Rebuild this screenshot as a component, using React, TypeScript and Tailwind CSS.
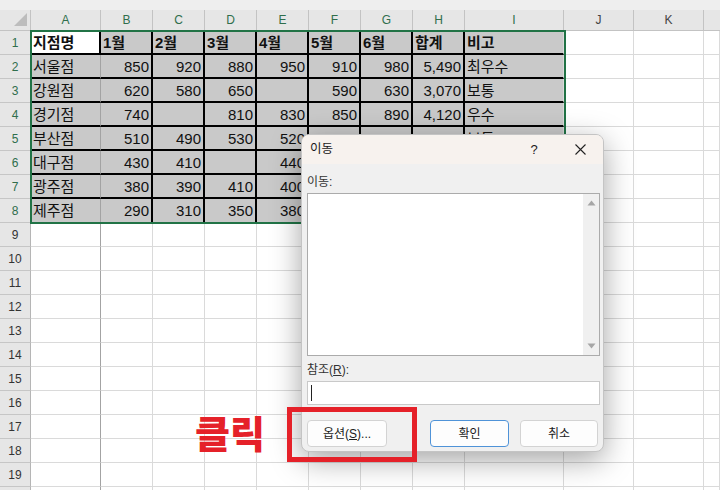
import React from 'react';

const COLS = ['A', 'B', 'C', 'D', 'E', 'F', 'G', 'H', 'I', 'J', 'K'];

const data: string[][] = [
  ['지점명', '1월', '2월', '3월', '4월', '5월', '6월', '합계', '비고'],
  ['서울점', '850', '920', '880', '950', '910', '980', '5,490', '최우수'],
  ['강원점', '620', '580', '650', '', '590', '630', '3,070', '보통'],
  ['경기점', '740', '', '810', '830', '850', '890', '4,120', '우수'],
  ['부산점', '510', '490', '530', '520', '530', '540', '3,120', '보통'],
  ['대구점', '430', '410', '', '440', '450', '460', '2,190', '보통'],
  ['광주점', '380', '390', '410', '400', '420', '430', '2,430', '보통'],
  ['제주점', '290', '310', '350', '380', '360', '370', '2,060', '보통'],
];

const isNumber = (v: string) => /^[\d,]+$/.test(v);

const DataCell: React.FC<{ row: number; col: number }> = ({ row, col }) => {
  // row 1..20, col 0..11 (A..K + filler)
  const inTable = row <= 8 && col <= 8;
  const value = inTable ? data[row - 1][col] : '';

  let bg = 'bg-white';
  let bottom = 'border-b border-b-[#dadada]';
  let right = 'border-r border-r-[#dadada]';

  if (inTable) {
    bg = row === 1 && col === 0 ? 'bg-white' : 'bg-[#c9c9c9]';
    if (row <= 7) bottom = 'border-b-2 border-b-black';
    if ((col >= 1 && col <= 7) || (row === 1 && col === 0)) right = 'border-r-2 border-r-black';
    else if (col === 0) right = 'border-r border-r-[#a3a3a3]';
  } else if (col === 0) {
    right = 'border-r border-r-[#a3a3a3]';
  }

  const align = isNumber(value) ? 'justify-end' : 'justify-start';
  const weight = row === 1 ? 'font-bold' : 'font-normal';

  return (
    <div
      className={`flex h-[24px] items-center overflow-hidden whitespace-nowrap px-[2px] text-[15px] leading-none text-[#111] ${bg} ${bottom} ${right} ${align} ${weight}`}
    >
      {value}
    </div>
  );
};

const ArrowUp = () => (
  <svg width="9" height="6" viewBox="0 0 9 6">
    <path d="M4.5 0.5 L8.5 5.5 L0.5 5.5 Z" fill="#a6a6a6" />
  </svg>
);

const ArrowDown = () => (
  <svg width="9" height="6" viewBox="0 0 9 6">
    <path d="M0.5 0.5 L8.5 0.5 L4.5 5.5 Z" fill="#a6a6a6" />
  </svg>
);

const GotoDialog: React.FC = () => (
  <div className="absolute left-[301px] top-[134px] flex h-[318px] w-[303px] flex-col overflow-hidden rounded-[8px] border border-[#c4c4c4] bg-[#f0f0f0] shadow-[0_8px_30px_rgba(0,0,0,0.36)] font-['Liberation_Sans','Noto_Sans_CJK_KR',sans-serif] text-[12px] text-[#1b1b1b]">
    {/* Title bar */}
    <div className="flex h-[29px] shrink-0 items-center bg-[#f7f2ee] pl-[8px]">
      <span className="flex-1 text-[12.5px]">이동</span>
      <div className="flex h-full w-[46px] items-center justify-center text-[13px]">?</div>
      <div className="flex h-full w-[46px] items-center justify-center">
        <svg width="11" height="11" viewBox="0 0 11 11">
          <path d="M0.5 0.5 L10.5 10.5 M10.5 0.5 L0.5 10.5" stroke="#222" strokeWidth="1.1" />
        </svg>
      </div>
    </div>

    {/* Body */}
    <div className="flex flex-1 flex-col pl-[5px] pr-[3px] pt-[11px]">
      <div className="h-[15px] leading-[15px] text-[#333]">이동:</div>
      <div className="mt-[3px] flex h-[163px] border border-[#ababab] bg-white">
        <div className="flex-1" />
        <div className="flex w-[16px] flex-col items-center justify-between bg-[#f0f0f0] py-[6px]">
          <ArrowUp />
          <ArrowDown />
        </div>
      </div>

      <div className="mt-[7px] h-[15px] leading-[15px] text-[#333]">
        참조(<span className="underline">R</span>):
      </div>
      <div className="mt-[3px] flex h-[24px] items-center border border-[#c9c9c9] bg-white pl-[3px]">
        <div className="h-[16px] w-[1px] bg-[#222]" />
      </div>

      <div className="mt-[15px] flex h-[27px] items-stretch">
        <div className="flex w-[80px] items-center justify-center rounded-[4px] border border-[#d3d3d3] bg-[#fdfdfd]">
          옵션(<span className="underline">S</span>)...
        </div>
        <div className="ml-auto mr-[2px] flex gap-[11px]">
          <div className="flex w-[79px] items-center justify-center rounded-[4px] border border-[#4f93d8] bg-[#fdfdfd]">
            확인
          </div>
          <div className="flex w-[78px] items-center justify-center rounded-[4px] border border-[#d3d3d3] bg-[#fdfdfd]">
            취소
          </div>
        </div>
      </div>
    </div>
  </div>
);

const App: React.FC = () => {
  const rows = Array.from({ length: 20 }, (_, i) => i + 1);

  return (
    <div className="relative h-[490px] w-[720px] overflow-hidden bg-white font-['Liberation_Sans','Noto_Sans_CJK_KR',sans-serif]">
      {/* strip above the headers */}
      <div className="h-[10px] bg-[#eeeeee]" />

      <div className="grid grid-cols-[31px_70px_52px_52px_52px_52px_52px_52px_52px_99px_70px_70px_1fr]">
        {/* Column headers */}
        <div className="flex h-[21px] items-end justify-end border-b border-r border-[#c3c3c3] bg-[#e6e6e6] pb-[4px] pr-[3px]">
          <svg width="13" height="13" viewBox="0 0 13 13">
            <path d="M13 0 L13 13 L0 13 Z" fill="#bdbdbd" />
          </svg>
        </div>
        {COLS.map((c, i) => (
          <div
            key={c}
            className={`flex h-[21px] items-center justify-center border-b border-r border-[#c3c3c3] bg-[#e6e6e6] text-[12px] ${
              i <= 8 ? 'text-[#2f6e4c]' : 'text-[#444]'
            }`}
          >
            {c}
          </div>
        ))}
        <div className="h-[21px] border-b border-[#c3c3c3] bg-[#e6e6e6]" />

        {/* Rows */}
        {rows.map((r) => (
          <React.Fragment key={r}>
            <div
              className={`flex h-[24px] items-center justify-center border-b border-r border-b-[#c6c6c6] border-r-[#b5b5b5] bg-[#e6e6e6] text-[12px] ${
                r <= 8 ? 'text-[#2f6e4c]' : 'text-[#333]'
              }`}
            >
              {r}
            </div>
            {Array.from({ length: 12 }, (_, c) => (
              <DataCell key={c} row={r} col={c} />
            ))}
          </React.Fragment>
        ))}
      </div>

      {/* Selection outline A1:I8 */}
      <div className="pointer-events-none absolute left-[30px] top-[30px] h-[194px] w-[536px] border-2 border-[#217346]" />

      <GotoDialog />

      {/* Annotation */}
      <div className="absolute left-[195px] top-[411px] font-['Noto_Sans_CJK_KR',sans-serif] text-[38px] font-black leading-[42px] text-[#e52129]">
        클릭
      </div>
      <div className="pointer-events-none absolute left-[287px] top-[407px] h-[55px] w-[130px] border-[5px] border-[#e52129]" />
    </div>
  );
};

export default App;
